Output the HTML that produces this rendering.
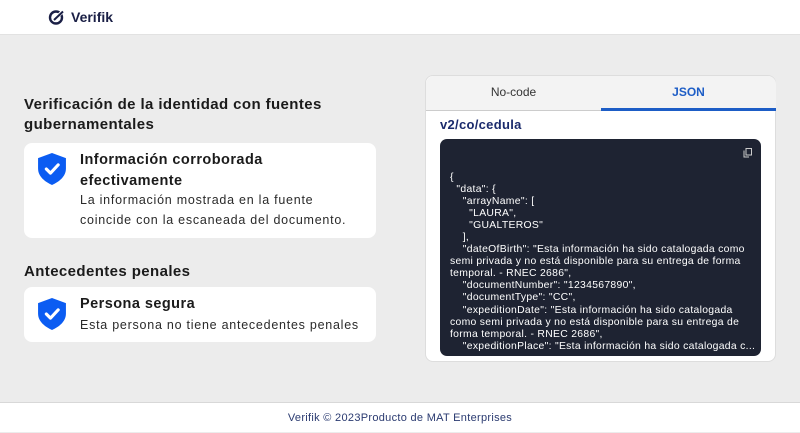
<!DOCTYPE html>
<html><head><meta charset="utf-8"><style>
*{margin:0;padding:0;box-sizing:border-box}
body{width:800px;height:432px;overflow:hidden;font-family:"Liberation Sans",sans-serif;background:#ececec;position:relative;color:#1b1b1b}
.hdr{position:absolute;left:0;top:0;width:800px;height:35px;background:#fff;border-bottom:1px solid #e2e2e2}
.logo{position:absolute;left:48px;top:9px;display:flex;align-items:center;gap:6px;font-weight:bold;font-size:14px;color:#1a1f45}
.ftr{position:absolute;left:0;top:402px;width:800px;height:30px;background:#fff;border-top:1px solid #d8d8d8;text-align:center;font-size:11px;color:#2a3a70;line-height:30px;letter-spacing:.3px}
h2{position:absolute;font-size:15px;font-weight:bold;line-height:20px;color:#1b1b1b;letter-spacing:.4px}
.card{position:absolute;left:24px;width:352px;background:#fff;border-radius:8px}
.card svg{position:absolute;left:14px}
.t{position:absolute;left:56px;font-size:14.5px;font-weight:bold;line-height:21px;color:#1b1b1b;letter-spacing:.45px}
.d{position:absolute;left:56px;font-size:12.5px;line-height:20px;color:#2a2a2a;letter-spacing:.75px}
.panel{position:absolute;left:425px;top:75px;width:351px;height:287px;background:#fff;border-radius:8px;border:1px solid #ddd}
.tab{position:absolute;top:0;height:35px;font-size:12px;line-height:33px;text-align:center}
.code{position:absolute;left:14px;top:63px;width:321px;height:217px;background:#1e2332;border-radius:7px;color:#fff;font-size:10.4px;line-height:12.05px;padding:33px 0 0 10px;white-space:pre;overflow:hidden;letter-spacing:.3px}
</style></head><body>
<div class="hdr"><div class="logo"><svg width="17" height="16" viewBox="0 0 17 16"><circle cx="8" cy="8.5" r="6" fill="none" stroke="#1a1f45" stroke-width="2.4"/><path d="M5 12 L15 2" stroke="#fff" stroke-width="3.5"/><path d="M6 11 L15 2.5" stroke="#1a1f45" stroke-width="2"/></svg>Verifik</div></div>

<h2 style="left:24px;top:95px">Verificación de la identidad con fuentes<br>gubernamentales</h2>
<div class="card" style="top:143px;height:95px">
<svg width="28" height="32" viewBox="0 0 27 31" style="top:10px"><path d="M13.5 0 L27 5 V15 C27 23 20 28 13.5 31 C7 28 0 23 0 15 V5 Z" fill="#0b5cf2"/><path d="M8 15.5 L12 19.5 L19.5 11.5" fill="none" stroke="#fff" stroke-width="3" stroke-linecap="round" stroke-linejoin="round"/></svg>
<div class="t" style="top:7px">Información corroborada<br>efectivamente</div>
<div class="d" style="top:47px">La información mostrada en la fuente<br>coincide con la escaneada del documento.</div>
</div>
<h2 style="left:24px;top:262px">Antecedentes penales</h2>
<div class="card" style="top:287px;height:55px">
<svg width="28" height="32" viewBox="0 0 27 31" style="top:11px"><path d="M13.5 0 L27 5 V15 C27 23 20 28 13.5 31 C7 28 0 23 0 15 V5 Z" fill="#0b5cf2"/><path d="M8 15.5 L12 19.5 L19.5 11.5" fill="none" stroke="#fff" stroke-width="3" stroke-linecap="round" stroke-linejoin="round"/></svg>
<div class="t" style="top:7px">Persona segura</div>
<div class="d" style="top:28px">Esta persona no tiene antecedentes penales</div>
</div>

<div class="panel">
<div class="tab" style="left:0;width:175px;background:#f3f3f3;border-bottom:1px solid #ccc;border-radius:8px 0 0 0;color:#333">No-code</div>
<div class="tab" style="left:175px;width:175px;background:#f3f3f3;border-bottom:3px solid #1d5dc6;border-radius:0 8px 0 0;color:#1d5dc6;font-weight:bold">JSON</div>
<div style="position:absolute;left:14px;top:41px;font-size:13px;font-weight:bold;color:#1a2a6c;letter-spacing:.3px">v2/co/cedula</div>
<div class="code"><svg style="position:absolute;right:9px;top:9px" width="9" height="10" viewBox="0 0 9 10"><rect x="3" y="0.5" width="5.5" height="6.5" fill="none" stroke="#ccc" stroke-width="1"/><path d="M1 2.5 V9 H6" fill="none" stroke="#ccc" stroke-width="1"/></svg>{
  "data": {
    "arrayName": [
      "LAURA",
      "GUALTEROS"
    ],
    "dateOfBirth": "Esta información ha sido catalogada como
semi privada y no está disponible para su entrega de forma
temporal. - RNEC 2686",
    "documentNumber": "1234567890",
    "documentType": "CC",
    "expeditionDate": "Esta información ha sido catalogada
como semi privada y no está disponible para su entrega de
forma temporal. - RNEC 2686",
    "expeditionPlace": "Esta información ha sido catalogada c...</div>
</div>

<div class="ftr">Verifik © 2023Producto de MAT Enterprises</div>
</body></html>
